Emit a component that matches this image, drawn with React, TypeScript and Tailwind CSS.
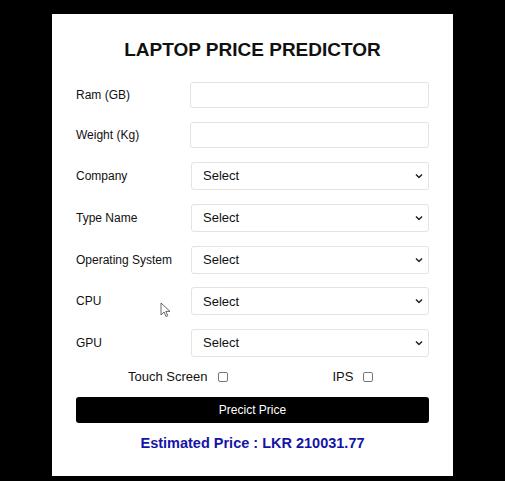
const selects = ['Company', 'Type Name', 'Operating System', 'CPU', 'GPU']

function Chevron() {
  return (
    <svg className="pointer-events-none absolute right-[6px] top-1/2 -translate-y-1/2" width="8" height="5" viewBox="0 0 8 5" fill="none">
      <path d="M1 1l3 3 3-3" stroke="#222" strokeWidth="1.5" />
    </svg>
  )
}

export default function App() {
  return (
    <div className="relative min-h-[481px] bg-black pt-[14px] font-['Liberation_Sans',Arial,sans-serif]">
      <div className="mx-auto h-[462px] w-[401px] bg-white px-[24px] pt-[24px]">
        <h1 className="text-center text-[19px] font-bold leading-[24px] text-[#111]">LAPTOP PRICE PREDICTOR</h1>

        <div className="mt-[20px] flex flex-col gap-[14px]">
          {['Ram (GB)', 'Weight (Kg)'].map((l) => (
            <div key={l} className="flex h-[26px] items-center">
              <label className="w-[114px] text-[12px] text-[#111]">{l}</label>
              <input className="h-[26px] flex-1 rounded-[3px] border border-[#e3e3e3] bg-white outline-none" />
            </div>
          ))}
        </div>

        <div className="mt-[14px] flex flex-col gap-[13.75px]">
          {selects.map((l) => (
            <div key={l} className="flex h-[28px] items-center">
              <label className="w-[115px] text-[12px] text-[#111]">{l}</label>
              <div className="relative h-[28px] flex-1">
                <select className="h-full w-full appearance-none rounded-[3px] border border-[#e3e3e3] bg-white pl-[11px] text-[13px] text-[#111] outline-none">
                  <option>Select</option>
                </select>
                <Chevron />
              </div>
            </div>
          ))}
        </div>

        <div className="mt-[12px] flex h-[16px] items-center text-[13px] text-[#111]">
          <span className="ml-[52px]">Touch Screen</span>
          <span className="ml-[10px] h-[10px] w-[10px] rounded-[2px] border border-[#777]" />
          <span className="ml-[105px]">IPS</span>
          <span className="ml-[10px] h-[10px] w-[10px] rounded-[2px] border border-[#777]" />
        </div>

        <button className="mt-[12px] h-[26px] w-full rounded-[3px] bg-black text-[12px] text-white">Precict Price</button>

        <p className="mt-[10px] text-center text-[14.5px] font-bold text-[#1414a8]">Estimated Price : LKR 210031.77</p>
      </div>

      <svg className="absolute left-[160px] top-[302px]" width="11" height="16" viewBox="0 0 11 16">
        <path d="M1 1v12l3-3 2 4.5 1.8-.8-2-4.3H10z" fill="white" stroke="#555" strokeWidth="0.9" />
      </svg>
    </div>
  )
}
